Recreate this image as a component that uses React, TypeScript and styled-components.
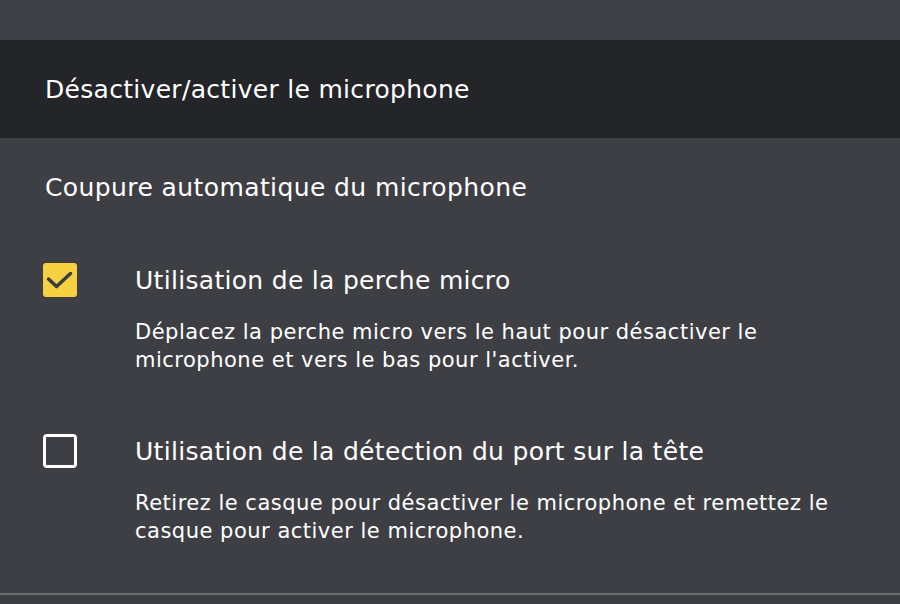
import React from "react";
import styled, { createGlobalStyle } from "styled-components";

const GlobalStyle = createGlobalStyle`
  html, body {
    margin: 0;
    padding: 0;
    background: #3e3f44;
  }
  body {
    font-family: "DejaVu Sans", "Noto Sans", sans-serif;
    color: #ffffff;
  }
`;

const Page = styled.div`
  width: 900px;
  height: 604px;
  background: #3e3f44;
  display: flex;
  flex-direction: column;
  overflow: hidden;
`;

const TopBar = styled.div`
  height: 40px;
  flex-shrink: 0;
  background: #3f4045;
`;

const SectionHeader = styled.div`
  height: 98px;
  flex-shrink: 0;
  background: #242528;
  display: flex;
  align-items: center;
  padding: 0 45px;
  font-size: 25px;
  letter-spacing: 0.3px;
`;

const Content = styled.div`
  flex: 1;
  min-height: 0;
  padding: 35px 45px 0;
  display: flex;
  flex-direction: column;
`;

const GroupTitle = styled.div`
  font-size: 25px;
  line-height: 30px;
  letter-spacing: 0.4px;
  margin-bottom: 63px;
`;

const Option = styled.div`
  display: grid;
  grid-template-columns: 90px 1fr;
  margin-bottom: 63px;

  &:last-child {
    margin-bottom: 0;
  }
`;

const Box = styled.div<{ $checked: boolean }>`
  width: 34px;
  height: 34px;
  box-sizing: border-box;
  margin-top: -3px;
  margin-left: -2px;
  border-radius: ${({ $checked }) => ($checked ? "3px" : "4px")};
  background: ${({ $checked }) => ($checked ? "#f5d040" : "transparent")};
  border: ${({ $checked }) => ($checked ? "none" : "3px solid #ffffff")};
`;

const OptionTitle = styled.div`
  font-size: 25px;
  line-height: 30px;
  letter-spacing: 0.3px;
  margin-bottom: 22px;
`;

const OptionText = styled.div`
  font-size: 21px;
  line-height: 28px;
  letter-spacing: 0.5px;
  max-width: 720px;
`;

const Footer = styled.div`
  height: 9px;
  flex-shrink: 0;
  border-top: 2px solid #6c6d71;
`;

const Check = () => (
  <svg width="34" height="34" viewBox="0 0 34 34" fill="none">
    <path
      d="M5.5 16 L13.5 23.5 L27.5 10.5"
      stroke="#3a3b3f"
      strokeWidth="3.5"
      strokeLinecap="round"
      strokeLinejoin="round"
    />
  </svg>
);

const options = [
  {
    checked: true,
    title: "Utilisation de la perche micro",
    text: "Déplacez la perche micro vers le haut pour désactiver le microphone et vers le bas pour l'activer.",
  },
  {
    checked: false,
    title: "Utilisation de la détection du port sur la tête",
    text: "Retirez le casque pour désactiver le microphone et remettez le casque pour activer le microphone.",
  },
];

export default function App() {
  return (
    <Page>
      <GlobalStyle />
      <TopBar />
      <SectionHeader>Désactiver/activer le microphone</SectionHeader>
      <Content>
        <GroupTitle>Coupure automatique du microphone</GroupTitle>
        {options.map((o) => (
          <Option key={o.title}>
            <Box $checked={o.checked}>{o.checked && <Check />}</Box>
            <div>
              <OptionTitle>{o.title}</OptionTitle>
              <OptionText>{o.text}</OptionText>
            </div>
          </Option>
        ))}
      </Content>
      <Footer />
    </Page>
  );
}
